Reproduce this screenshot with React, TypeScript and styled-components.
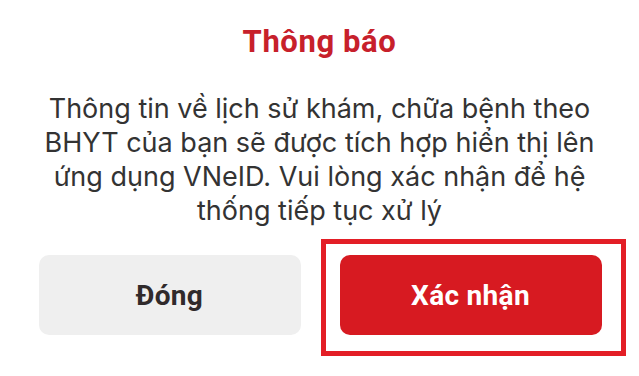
import React from "react";
import styled, { createGlobalStyle } from "styled-components";

const GlobalStyle = createGlobalStyle`
  html, body {
    margin: 0;
    padding: 0;
    background: #ffffff;
  }
  body {
    font-family: "Inter", "Roboto", "Liberation Sans", sans-serif;
    -webkit-font-smoothing: antialiased;
  }
`;

const App = () => {
  return (
    <>
      <GlobalStyle />
      <Dialog>
        <Title>Thông báo</Title>
        <Message>
          Thông tin về lịch sử khám, chữa bệnh theo BHYT của bạn sẽ được tích
          hợp hiển thị lên ứng dụng VNeID. Vui lòng xác nhận để hệ thống tiếp
          tục xử lý
        </Message>
        <Actions>
          <Button>Đóng</Button>
          <ButtonWrap>
            <Button $primary>Xác nhận</Button>
            <Highlight />
          </ButtonWrap>
        </Actions>
      </Dialog>
    </>
  );
};

export default App;

const Dialog = styled.div`
  width: 639px;
  height: 376px;
  box-sizing: border-box;
  padding-top: 24px;
  display: flex;
  flex-direction: column;
  align-items: center;
  background: #ffffff;
`;

const Title = styled.h1`
  margin: 0;
  font-family: "Roboto", "Liberation Sans", sans-serif;
  font-size: 31px;
  line-height: 36px;
  font-weight: 700;
  letter-spacing: 0.6px;
  color: #c7202b;
`;

const Message = styled.p`
  margin: 32px 0 0;
  width: 580px;
  font-size: 27px;
  line-height: 34px;
  font-weight: 400;
  color: #333333;
  text-align: center;
`;

const Actions = styled.div`
  margin-top: 27px;
  display: flex;
  gap: 39px;
  padding-left: 1px;
`;

const ButtonWrap = styled.div`
  position: relative;
  display: flex;
`;

const Button = styled.button<{ $primary?: boolean }>`
  width: 262px;
  height: 80px;
  border: none;
  border-radius: 10px;
  font-family: "Roboto", "Liberation Sans", sans-serif;
  font-size: 28px;
  font-weight: 700;
  letter-spacing: 0.3px;
  background: ${(p) => (p.$primary ? "#d71a21" : "#efefef")};
  color: ${(p) => (p.$primary ? "#ffffff" : "#302a2b")};
  cursor: pointer;
`;

const Highlight = styled.span`
  position: absolute;
  top: -16px;
  left: -19px;
  right: -24px;
  bottom: -21px;
  border: 5px solid #e31e26;
  pointer-events: none;
`;
